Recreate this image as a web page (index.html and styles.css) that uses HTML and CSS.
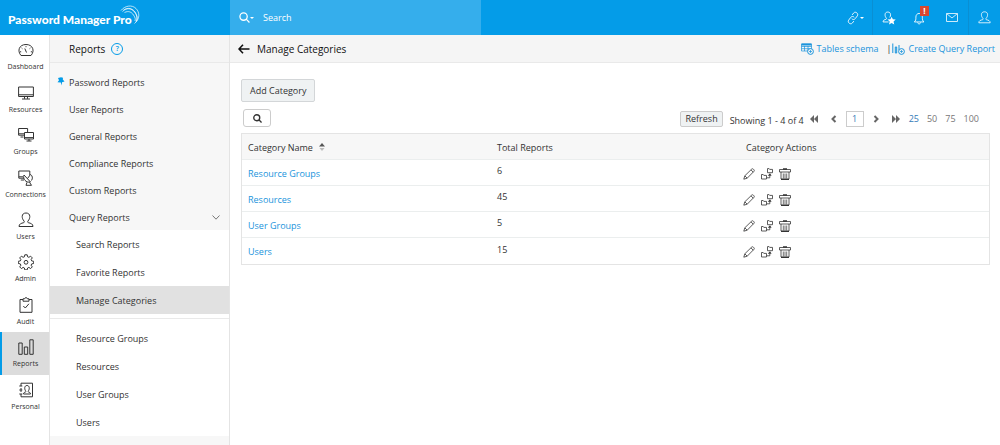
FILE: index.html
```html
<!DOCTYPE html>
<html lang="en">
<head>
    <meta charset="UTF-8">
    <title>Password Manager Pro</title>
    <meta name="viewport" content="width=device-width, initial-scale=1.0">
    <link rel="stylesheet" href="styles.css">
</head>
<body>
    <!-- shared icons -->
    <svg class="icon-defs" aria-hidden="true">
        <symbol id="i-search" viewBox="0 0 12 12"><circle cx="5" cy="5" r="4"/><path d="M7.800 7.800L11.400 11.400"/></symbol>
        <symbol id="i-user" viewBox="0 0 16 16"><path d="M1 14.500c0-2.600 2.200-3.200 4.600-3.800.9-.3.9-1 .4-1.700C4.700 7.500 4.200 6 4.200 4.500 4.200 2.200 5.800 1 8 1s3.800 1.200 3.800 3.500c0 1.500-.5 3-1.800 4.500-.5.7-.5 1.400.4 1.700 2.400.6 4.600 1.200 4.600 3.800z"/></symbol>
        <symbol id="i-pencil" viewBox="0 0 12 12"><path d="M.8 11.200l1-3.400L8.600 1.200c.5-.6 1.100-.6 1.700-.1l.6.600c.5.5.5 1.100 0 1.700L4.200 10.200zM1.800 7.800l2.400 2.400M8 1.900l2.200 2.300"/></symbol>
        <symbol id="i-move" viewBox="0 0 12 12"><path d="M.5 6.500h1.700l.6.900h2.700v3.600H.5zM6.500.6h1.600l.6.800h2.800v3.300h-5zM6 9.800h2.800V7.400"/><path class="solid" d="M6.800 7.800L9 5.200l1.600 2.600z"/></symbol>
        <symbol id="i-trash" viewBox="0 0 12 12"><path d="M.5 1.500h11v2.500H.5zM2 4v7M10 4v7"/><path class="fine" d="M4.300 5.500v5M6 5.500v5M7.700 5.500v5"/><path class="heavy" d="M4 1h4M2 11.300h8"/></symbol>
    </svg>

    <header class="topbar">
        <a class="logo" href="#">
            <span>Password Manager Pro</span>
            <svg class="logo-arc" viewBox="0 0 20 20"><path class="fine" d="M1 5.500C5 .5 12-.5 16 3.500s4 10.500-1.500 15"/><path class="fine" d="M2.500 6.500c4-4 9-3.500 12 .5s3 7 1.500 10M3.500 5C8 2 12.500 3.500 15 7s2.500 7 1.500 9M4.500 7.500c4-2 7-.5 9 2.500s2 4 1.500 6"/></svg>
        </a>
        <form class="search">
            <button type="button" class="search-scope" aria-label="Search scope">
                <svg class="icon-search"><use href="#i-search"/></svg><span class="caret"></span>
            </button>
            <input type="text" placeholder="Search" aria-label="Search">
        </form>
        <nav class="top-actions">
            <button type="button" class="link-action" aria-label="Links">
                <svg class="icon-top" viewBox="0 0 16 16"><path d="M7 4.500l1.800-2.300c2-2.300 5.900.8 4.200 3.300L10.600 8.700C9.500 10.100 7.600 10 6.600 8.800M9 11.500l-1.800 2.300C5.200 16.100 1.300 13 3 10.500l2.400-3.200C6.500 5.900 8.400 6 9.400 7.200"/></svg><span class="caret"></span>
            </button>
            <button type="button" class="divided" aria-label="Favorites">
                <svg class="icon-top" viewBox="0 0 16 16"><path d="M7.500 12.500H1.200c0-2 1.600-2.500 3.300-3 .8-.3.8-1 .4-1.500C3.800 6.800 3.500 5.600 3.500 4.300 3.500 2.200 4.800 1.200 6.600 1.200s3.200 1 3.200 3.100c0 1.200-.3 2.100-1 3"/><path class="solid" d="M11 6.500l1.400 3 3.300.3-2.500 2.200.8 3.300-3-1.700-3 1.700.8-3.300-2.500-2.200 3.300-.3z"/></svg>
            </button>
            <button type="button" aria-label="Alerts">
                <svg class="icon-top" viewBox="0 0 16 16"><path d="M1.500 12.500c1.800-1.400 1.800-3 1.800-5.500C3.300 4.500 4.800 2.800 7 2.800s3.700 1.700 3.700 4.200c0 2.500 0 4.100 1.800 5.500zM5.300 13c.2 2.300 3.200 2.300 3.400 0"/></svg>
                <span class="badge">!</span>
            </button>
            <button type="button" aria-label="Messages">
                <svg class="icon-mail" viewBox="0 0 12 9"><path d="M.5.5h11v8H.5zM.5.500L6 5l5.500-4.500"/></svg>
            </button>
            <button type="button" class="divided" aria-label="Account">
                <svg class="icon-account"><use href="#i-user"/></svg>
            </button>
        </nav>
    </header>

    <div class="layout">
        <nav class="rail">
            <a href="#"><svg viewBox="0 0 16 16"><path d="M3 13.500C-1 9 1 2.500 8 2.500s9 6.500 5 11zM8 4.200v1M3.600 6l.8.700M12.400 6l-.8.700M2 9.800h1.200M14 9.800h-1.200M8.500 10.500L6.800 6.500"/></svg>Dashboard</a>
            <a href="#"><svg viewBox="0 0 16 16"><path d="M.6 2h14.800v9.500H.6zM.6 9.800h14.800M6.500 11.500v2.300M9.500 11.500v2.300M4 14h8"/></svg>Resources</a>
            <a href="#"><svg viewBox="0 0 16 16"><path d="M6 8.200H.6V1.500h9v3.500M.6 6.800H6M2.500 10h3M6.500 5.500h9v6.500h-9zM6.500 10.600h9M8.500 14h5M11 12v2"/></svg>Groups</a>
            <a href="#"><svg viewBox="0 0 16 16"><path d="M6 8.200H.8V1h11v4M.8 6.800H5M2.800 10H6M6 5c-1.500 4 2 8 6.500 7zM12.500 4.500L9.500 8.500M12.500 4.500c2 1 2.500 4 1 6M9 12.300l-1 3h5.500l-2-3"/></svg>Connections</a>
            <a href="#"><svg><use href="#i-user"/></svg>Users</a>
            <a href="#"><svg viewBox="0 0 16 16"><path d="M6.800.8h2.400l.4 2 1.300.5L12.600 2.200l1.700 1.700-1.200 1.700.6 1.300 2 .4v2.200l-2 .4-.6 1.300 1.200 1.700-1.700 1.700-1.700-1.200-1.300.6-.4 1.900H6.800l-.4-1.900-1.300-.6-1.700 1.200-1.700-1.700 1.200-1.700-.6-1.300-2-.4V7.300l2-.4.6-1.300-1.200-1.700 1.700-1.700 1.700 1.100 1.300-.5z"/><circle cx="8" cy="8.300" r="1.900"/></svg>Admin</a>
            <a href="#"><svg viewBox="0 0 16 16"><path d="M5 2.500H2v12.800h12V2.500h-3M5 1.800h1.600c.3-1.600 2.500-1.600 2.800 0H11v2.400H5zM5.300 9l2 2 3.600-4.200"/></svg>Audit</a>
            <a href="#" class="active"><svg viewBox="0 0 16 16"><path d="M.8 4h3.400v11.300H.8zM6.300 8h3.400v7.300H6.300zM11.800.8h3.400v14.500h-3.400z"/></svg>Reports</a>
            <a href="#"><svg viewBox="0 0 16 16"><path d="M3 4V1.200h11.500v13.600H3V12M3 6v4M1.300 4h3M1.300 8h3M1.300 12h3M5.500 12c0-1.500 1-1.600 2-2 .6-.3.4-.8 0-1.300C6.300 7 6.300 3.500 9 3.500s2.700 3.500 1.500 5.200c-.4.5-.6 1 0 1.300 1 .4 2 .5 2 2z"/></svg>Personal</a>
        </nav>

        <aside class="sidebar">
            <h2 class="sidebar-title">Reports <a class="help" href="#">?</a></h2>
            <ul class="report-list">
                <li><a href="#"><svg class="pin" viewBox="0 0 8 9"><path d="M1 1l3-.8 2 .5-.2 1.700L7.500 4.500 5 5.300V8.500L3.800 5.500.5 5.200 2 3.300z"/></svg>Password Reports</a></li>
                <li><a href="#">User Reports</a></li>
                <li><a href="#">General Reports</a></li>
                <li><a href="#">Compliance Reports</a></li>
                <li><a href="#">Custom Reports</a></li>
                <li><a href="#">Query Reports<svg class="chevron" viewBox="0 0 8 5"><path d="M.5.500L4 4.200 7.500.5"/></svg></a></li>
            </ul>
            <ul class="sub-list">
                <li><a href="#">Search Reports</a></li>
                <li><a href="#">Favorite Reports</a></li>
                <li><a href="#" class="active">Manage Categories</a></li>
            </ul>
            <ul class="sub-list categories">
                <li><a href="#">Resource Groups</a></li>
                <li><a href="#">Resources</a></li>
                <li><a href="#">User Groups</a></li>
                <li><a href="#">Users</a></li>
            </ul>
        </aside>

        <main class="content">
            <div class="page-header">
                <button type="button" class="back" aria-label="Back"><svg viewBox="0 0 12 10"><path d="M5 .8L1 5l4 4.200M1 5h10.500"/></svg></button>
                <h1>Manage Categories</h1>
                <a class="header-link" href="#"><svg viewBox="0 0 13 12"><path class="fine" d="M.5 1h10v7h-10zM.5 3.500h10M.5 5.700h10M3.500 3v5M7 3v5"/><path class="thick" d="M.5 1.500h10"/><circle class="cover" cx="9.500" cy="8.500" r="2.900"/><path class="fine" d="M9.500 7v3M8 8.500h3"/></svg>Tables schema</a>
                <span class="bar">|</span>
                <a class="header-link" href="#"><svg viewBox="0 0 13 12"><path d="M.8.500V10M3.300 4h1.400v6H3.300zM7 2v5"/><circle class="cover" cx="9.500" cy="8.500" r="2.900"/><path class="fine" d="M9.500 7v3M8 8.500h3"/></svg>Create Query Report</a>
            </div>

            <div class="page-body">
                <button type="button" class="add-button">Add Category</button>

                <div class="toolbar">
                    <button type="button" class="filter-button" aria-label="Filter"><svg><use href="#i-search"/></svg></button>
                    <div class="paging">
                        <button type="button" class="refresh">Refresh</button>
                        <span class="showing">Showing 1 - 4 of 4</span>
                        <button type="button" class="step" aria-label="First page"><svg viewBox="0 0 8 8"><path class="solid" d="M4 0v8L0 4zM8 0v8L4 4z"/></svg></button>
                        <button type="button" class="step" aria-label="Previous page"><svg viewBox="0 0 8 8"><path d="M5.500 1L2.500 4l3 3"/></svg></button>
                        <button type="button" class="page-number">1</button>
                        <button type="button" class="step" aria-label="Next page"><svg viewBox="0 0 8 8"><path d="M2.500 1l3 3-3 3"/></svg></button>
                        <button type="button" class="step" aria-label="Last page"><svg viewBox="0 0 8 8"><path class="solid" d="M4 0v8l4-4zM0 0v8l4-4z"/></svg></button>
                        <div class="page-sizes">
                            <a href="#" class="current">25</a>
                            <a href="#">50</a>
                            <a href="#">75</a>
                            <a href="#">100</a>
                        </div>
                    </div>
                </div>

                <table class="categories-table">
                    <thead>
                        <tr>
                            <th>Category Name <svg class="sort" viewBox="0 0 6 8"><path class="up" d="M0 3.500L3 0l3 3.500z"/><path class="down" d="M.5 5h5L3 8z"/></svg></th>
                            <th>Total Reports</th>
                            <th>Category Actions</th>
                        </tr>
                    </thead>
                    <tbody>
                        <tr>
                            <td><a href="#">Resource Groups</a></td>
                            <td class="total">6</td>
                            <td><div class="actions">
                                <button type="button" aria-label="Edit"><svg><use href="#i-pencil"/></svg></button>
                                <button type="button" aria-label="Move"><svg><use href="#i-move"/></svg></button>
                                <button type="button" aria-label="Delete"><svg><use href="#i-trash"/></svg></button>
                            </div></td>
                        </tr>
                        <tr>
                            <td><a href="#">Resources</a></td>
                            <td class="total">45</td>
                            <td><div class="actions">
                                <button type="button" aria-label="Edit"><svg><use href="#i-pencil"/></svg></button>
                                <button type="button" aria-label="Move"><svg><use href="#i-move"/></svg></button>
                                <button type="button" aria-label="Delete"><svg><use href="#i-trash"/></svg></button>
                            </div></td>
                        </tr>
                        <tr>
                            <td><a href="#">User Groups</a></td>
                            <td class="total">5</td>
                            <td><div class="actions">
                                <button type="button" aria-label="Edit"><svg><use href="#i-pencil"/></svg></button>
                                <button type="button" aria-label="Move"><svg><use href="#i-move"/></svg></button>
                                <button type="button" aria-label="Delete"><svg><use href="#i-trash"/></svg></button>
                            </div></td>
                        </tr>
                        <tr>
                            <td><a href="#">Users</a></td>
                            <td class="total">15</td>
                            <td><div class="actions">
                                <button type="button" aria-label="Edit"><svg><use href="#i-pencil"/></svg></button>
                                <button type="button" aria-label="Move"><svg><use href="#i-move"/></svg></button>
                                <button type="button" aria-label="Delete"><svg><use href="#i-trash"/></svg></button>
                            </div></td>
                        </tr>
                    </tbody>
                </table>
            </div>
        </main>
    </div>
</body>
</html>
```

FILE: styles.css
```css
* {
    box-sizing: border-box;
}

body {
    margin: 0;
    min-height: 100vh;
    display: flex;
    flex-direction: column;
    font-family: "Open Sans", "Noto Sans", sans-serif;
    font-size: 9px;
    line-height: 12px;
    color: #333;
    background: #fff;
}

a {
    color: inherit;
    text-decoration: none;
}

button {
    padding: 0;
    border: none;
    background: none;
    font: inherit;
    color: inherit;
    cursor: pointer;
}

ul {
    list-style: none;
    margin: 0;
    padding: 0;
}

svg {
    display: block;
    flex: none;
    fill: none;
    stroke: currentColor;
    stroke-width: 1;
}

.solid {
    fill: currentColor;
    stroke: none;
}

.fine {
    stroke-width: 0.7;
}

.heavy {
    stroke-width: 1.4;
}

.thick {
    stroke-width: 2;
}

.icon-defs {
    display: none;
}

/* top bar */
.topbar {
    display: flex;
    height: 35px;
    background: #049ce8;
    color: #fff;
}

.logo {
    display: flex;
    align-items: center;
    width: 230px;
    padding-left: 8px;
    font-family: Lato, "Open Sans", sans-serif;
    font-size: 12px;
    font-weight: 900;
}

.logo span {
    padding-top: 4px;
}

.logo-arc {
    width: 20px;
    height: 20px;
    margin-left: -12px;
    margin-bottom: 6px;
}

.search {
    display: flex;
    align-items: center;
    width: 251px;
    padding-left: 9px;
    background: #35aeec;
}

.search-scope {
    display: flex;
    align-items: center;
    width: 24px;
}

.icon-search {
    width: 11px;
    height: 11px;
    stroke-width: 1.4;
}

.caret {
    border: 2px solid transparent;
    border-top-color: currentColor;
    border-bottom: none;
}

.search input {
    flex: 1;
    min-width: 0;
    padding: 0;
    border: none;
    background: none;
    color: #fff;
    font: inherit;
}

.search input::placeholder {
    color: #fff;
    opacity: 1;
}

.top-actions {
    display: flex;
    margin-left: auto;
}

.top-actions button {
    position: relative;
    display: flex;
    align-items: center;
    justify-content: center;
    width: 32px;
}

.top-actions .link-action {
    width: 34px;
}

.top-actions .divided {
    border-left: 1px solid #0a8fd3;
}

.icon-top {
    width: 14px;
    height: 14px;
}

.icon-mail {
    width: 12px;
    height: 9px;
    opacity: 0.8;
}

.icon-account {
    width: 13px;
    height: 13px;
}

.badge {
    position: absolute;
    top: 6px;
    left: 16px;
    width: 9px;
    height: 10px;
    background: #d9472f;
    font-size: 8px;
    font-weight: 700;
    line-height: 10px;
}

/* left rail */
.layout {
    display: flex;
    flex: 1;
}

.rail {
    display: flex;
    flex-direction: column;
    width: 50px;
    padding-bottom: 28px;
    border-right: 1px solid #e4e4e4;
}

.rail a {
    display: flex;
    flex: 1;
    flex-direction: column;
    align-items: center;
    justify-content: center;
    gap: 4px;
    padding: 2px 2px 0 4px;
    font-size: 7px;
    line-height: 10px;
}

.rail svg {
    width: 16px;
    height: 16px;
}

.rail .active {
    padding-left: 2px;
    border-left: 2px solid #049ce8;
    background: #dcdcdc;
}

/* report list */
.sidebar {
    width: 180px;
    border-right: 1px solid #e4e4e4;
    background: #f7f7f7;
}

.sidebar-title {
    display: flex;
    align-items: center;
    gap: 4px;
    height: 28px;
    margin: 0 0 5px;
    padding: 1px 0 0 19px;
    border-bottom: 1px solid #e9e9e9;
    background: #f5f5f5;
    color: #111;
    font-size: 10px;
    font-weight: 400;
}

.help {
    width: 12px;
    height: 12px;
    margin-left: 2px;
    border: 1px solid #049ce8;
    border-radius: 50%;
    color: #049ce8;
    font-size: 7px;
    font-weight: 600;
    line-height: 10px;
    text-align: center;
}

.report-list a {
    position: relative;
    display: flex;
    align-items: center;
    height: 27px;
    padding: 2px 9px 0 19px;
}

.pin {
    position: absolute;
    left: 7px;
    top: 9px;
    width: 8px;
    height: 9px;
    fill: #049ce8;
    stroke: none;
}

.chevron {
    width: 8px;
    height: 5px;
    margin-left: auto;
    color: #777;
}

.sub-list {
    padding-bottom: 4px;
    background: #fff;
}

.sub-list a {
    display: flex;
    align-items: center;
    height: 28px;
    padding: 1px 0 0 26px;
}

.sub-list .active {
    background: #e1e1e1;
}

.categories {
    padding: 5px 0 0;
    border-top: 1px solid #e9e9e9;
}

/* main area */
.content {
    flex: 1;
    min-width: 0;
}

.page-header {
    display: flex;
    align-items: center;
    height: 28px;
    padding: 0 5px 0 8px;
    border-bottom: 1px solid #e9e9e9;
    background: #f5f5f5;
}

.back svg {
    width: 12px;
    height: 10px;
    color: #111;
    stroke-width: 1.6;
}

.page-header h1 {
    margin: 0 auto 0 7px;
    color: #111;
    font-size: 10px;
    font-weight: 400;
}

.header-link {
    display: flex;
    align-items: center;
    gap: 3px;
    color: #1a94dc;
}

.header-link svg {
    width: 13px;
    height: 12px;
}

.header-link .cover {
    fill: #f5f5f5;
}

.bar {
    margin: 0 1px 0 8px;
}

.page-body {
    padding: 16px 10px 0 11px;
}

.add-button {
    display: block;
    height: 23px;
    padding: 0 8px;
    border: 1px solid #d3d6d8;
    border-radius: 2px;
    background: #eff2f3;
}

.toolbar {
    display: flex;
    align-items: flex-end;
    justify-content: space-between;
    margin: 7px 0 6px;
    padding: 0 11px 0 2px;
}

.filter-button {
    display: flex;
    align-items: center;
    justify-content: center;
    width: 28px;
    height: 18px;
    border: 1px solid #ccc;
    border-radius: 3px;
}

.filter-button svg {
    width: 9px;
    height: 9px;
    stroke-width: 1.8;
}

.paging {
    display: flex;
    align-items: center;
    height: 16px;
}

.refresh {
    height: 16px;
    padding: 0 4px;
    border: 1px solid #ccc;
    border-radius: 2px;
    background: #eff2f3;
}

.showing {
    margin: 3px 6px 0 7px;
}

.step svg {
    width: 8px;
    height: 8px;
    color: #666;
}

.step path:not(.solid) {
    stroke-width: 2;
}

.step + .step {
    margin-left: 12px;
}

.page-number {
    width: 18px;
    height: 16px;
    margin: 0 8px;
    border: 1px solid #ccc;
    color: #337ab7;
}

.page-sizes {
    display: flex;
    gap: 8px;
    margin-left: 9px;
    color: #777;
}

.page-sizes .current {
    color: #337ab7;
}

/* categories table */
.categories-table {
    width: 100%;
    table-layout: fixed;
    border: 1px solid #e4e4e4;
    border-spacing: 0;
}

.categories-table th,
.categories-table td {
    height: 26px;
    padding: 2px 6px 0;
    border-bottom: 1px solid #ebeeee;
    text-align: left;
    font-weight: 400;
}

.categories-table th {
    background: #f7f7f7;
}

.categories-table tr:last-child td {
    border-bottom: none;
}

.categories-table td a {
    color: #1a94dc;
}

.categories-table .total {
    padding-bottom: 5px;
}

.sort {
    display: inline-block;
    width: 6px;
    height: 8px;
    margin-left: 4px;
    stroke: none;
}

.sort .up {
    fill: #555;
}

.sort .down {
    fill: #bbb;
}

.actions {
    display: flex;
    gap: 6px;
    margin-left: -3px;
}

.actions svg {
    width: 12px;
    height: 12px;
    stroke-width: 0.8;
}
```
